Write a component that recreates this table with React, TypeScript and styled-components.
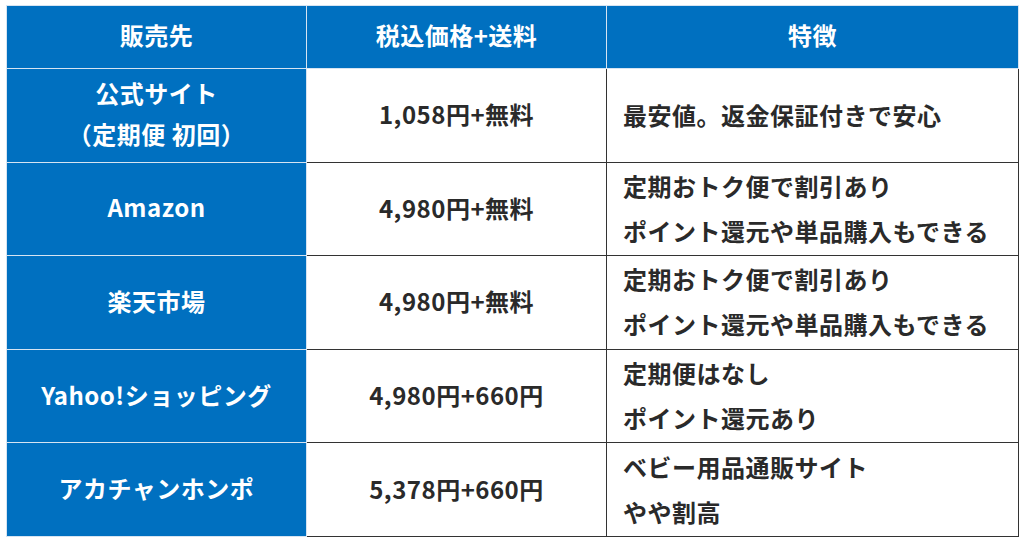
import styled, { createGlobalStyle } from 'styled-components';

const GlobalStyle = createGlobalStyle`
    body {
        margin: 0;
        background: #fff;
        font-family: "Noto Sans CJK JP", "Noto Sans", sans-serif;
    }
`;

const Wrap = styled.div`
    padding: 5px 6px 0 6px;
`;

const Table = styled.table`
    border-collapse: collapse;
    width: 1012px;
    table-layout: fixed;
    border: 1px solid #8a8a8a;
`;

// cell height + bottom padding = 62 / 92.6
const HeadCell = styled.th`
    background: #0070c0;
    color: #fff;
    font-size: 24px;
    font-weight: 700;
    letter-spacing: 0.5px;
    line-height: 30px;
    height: 57px;
    padding: 0 0 5px;
    text-align: center;
    border: 1px solid #d6e4f2;
`;

const NameCell = styled.th`
    background: #0070c0;
    color: #fff;
    font-size: 24px;
    font-weight: 700;
    letter-spacing: 0.5px;
    height: 88.6px;
    padding: 0 0 4px;
    text-align: center;
    border: 1px solid #d6e4f2;
`;

const Cell = styled.td<{ $align?: 'left' | 'center' }>`
    color: #2a2a2a;
    font-size: 24px;
    font-weight: 700;
    letter-spacing: 0.5px;
    height: 90.6px;
    padding: 0 0 2px ${p => (p.$align === 'left' ? '16px' : '0')};
    text-align: ${p => p.$align ?? 'center'};
    border: 1px solid #333;
`;

const Line = styled.div<{ $h: number }>`
    height: ${p => p.$h}px;
    line-height: ${p => p.$h}px;
    white-space: nowrap;
`;

const rows = [
    { name: ['公式サイト', '（定期便 初回）'], price: '1,058円+無料', note: ['最安値。返金保証付きで安心'] },
    { name: ['Amazon'], price: '4,980円+無料', note: ['定期おトク便で割引あり', 'ポイント還元や単品購入もできる'] },
    { name: ['楽天市場'], price: '4,980円+無料', note: ['定期おトク便で割引あり', 'ポイント還元や単品購入もできる'] },
    { name: ['Yahoo!ショッピング'], price: '4,980円+660円', note: ['定期便はなし', 'ポイント還元あり'] },
    { name: ['アカチャンホンポ'], price: '5,378円+660円', note: ['ベビー用品通販サイト', 'やや割高'] },
];

const App = () => (
    <Wrap>
        <GlobalStyle />
        <Table>
            <colgroup>
                <col style={{ width: 300 }} />
                <col style={{ width: 300 }} />
                <col style={{ width: 412 }} />
            </colgroup>
            <thead>
                <tr>
                    <HeadCell>販売先</HeadCell>
                    <HeadCell>税込価格+送料</HeadCell>
                    <HeadCell>特徴</HeadCell>
                </tr>
            </thead>
            <tbody>
                {rows.map(r => (
                    <tr key={r.price + r.name[0]}>
                        <NameCell>
                            {r.name.map(n => <Line $h={41} key={n}>{n}</Line>)}
                        </NameCell>
                        <Cell>
                            <Line $h={40}>{r.price}</Line>
                        </Cell>
                        <Cell $align="left">
                            {r.note.map(n => <Line $h={45} key={n}>{n}</Line>)}
                        </Cell>
                    </tr>
                ))}
            </tbody>
        </Table>
    </Wrap>
);

export default App;
